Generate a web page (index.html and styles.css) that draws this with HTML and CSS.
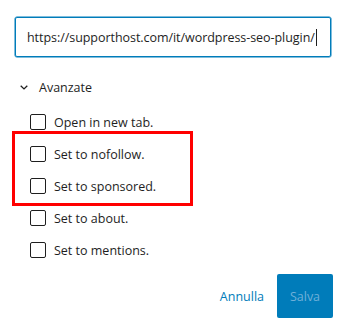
FILE: index.html
```html
<!DOCTYPE html>
<html>
<head>
<meta charset="utf-8">
<link rel="stylesheet" href="styles.css">
</head>
<body>
<div class="panel">
  <div class="url-field"><span class="url-text">https://supporthost.com/it/wordpress-seo-plugin/</span><span class="caret"></span></div>
  <div class="advanced">
    <div class="toggle">
      <svg class="chevron" width="8" height="5" viewBox="0 0 8 5"><path d="M0.7 0.7 L4 3.9 L7.3 0.7" fill="none" stroke="#1e1e1e" stroke-width="1.3"/></svg>
      <span>Avanzate</span>
    </div>
    <div class="options">
      <label class="option"><span class="box"></span><span>Open in new tab.</span></label>
      <div class="group">
        <span class="highlight"></span>
        <label class="option"><span class="box"></span><span>Set to nofollow.</span></label>
        <label class="option"><span class="box"></span><span>Set to sponsored.</span></label>
      </div>
      <label class="option"><span class="box"></span><span>Set to about.</span></label>
      <label class="option"><span class="box"></span><span>Set to mentions.</span></label>
    </div>
  </div>
  <div class="actions">
    <span class="cancel">Annulla</span>
    <span class="save">Salva</span>
  </div>
</div>
</body>
</html>
```
FILE: styles.css
```css
html, body {
  margin: 0;
  background: #fff;
}
body {
  font-family: "Open Sans", "Noto Sans", sans-serif;
  font-size: 12.5px;
  color: #1e1e1e;
  width: 345px;
  height: 325px;
  overflow: hidden;
}
.panel {
  padding: 17px 12px 0 15px;
}
.url-field {
  height: 40px;
  box-sizing: border-box;
  border: 1px solid #007cba;
  border-radius: 2px;
  box-shadow: 0 0 0 0.5px #007cba;
  display: flex;
  align-items: center;
  padding-left: 11px;
  margin-right: 2px;
}
.url-text {
  letter-spacing: -0.05px;
}
.caret {
  width: 1px;
  height: 17px;
  background: #1e1e1e;
  margin-left: 1px;
}
.advanced {
  margin-top: 20px;
}
.toggle {
  display: flex;
  align-items: center;
  height: 20px;
  padding-left: 5px;
}
.chevron {
  margin-right: 11px;
}
.options {
  margin-top: 9px;
  padding-left: 15px;
}
.group {
  position: relative;
}
.highlight {
  position: absolute;
  left: -18px;
  top: -7px;
  width: 181px;
  height: 75px;
  box-sizing: border-box;
  border: 3px solid #ff0000;
}
.option {
  display: flex;
  align-items: center;
  height: 32px;
}
.box {
  width: 16px;
  height: 16px;
  box-sizing: border-box;
  border: 1px solid #1e1e1e;
  border-radius: 2px;
  margin-right: 8px;
}
.actions {
  display: flex;
  justify-content: flex-end;
  align-items: center;
  margin-top: 8px;
}
.cancel {
  color: #007cba;
  margin-right: 13px;
}
.save {
  width: 56px;
  height: 44px;
  display: flex;
  align-items: center;
  justify-content: center;
  background: #007cba;
  color: #6fb0d9;
  border-radius: 2px;
}
```
